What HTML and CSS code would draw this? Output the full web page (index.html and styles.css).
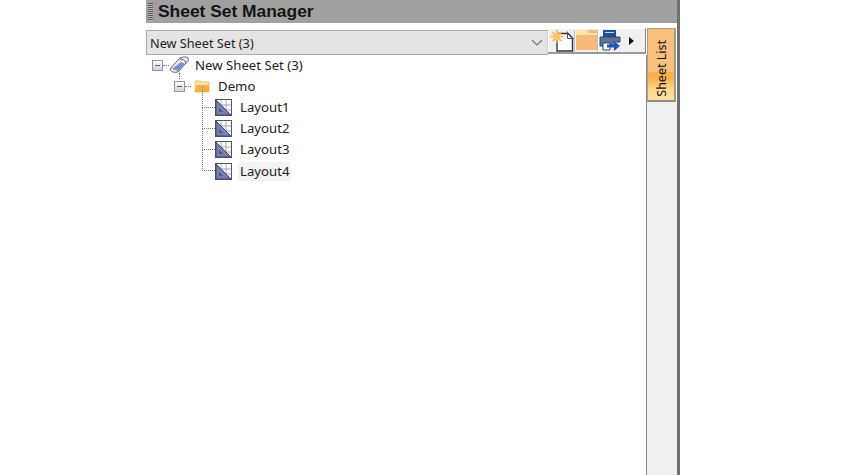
FILE: index.html
```html
<!DOCTYPE html>
<html lang="en">
<head>
<meta charset="utf-8">
<title>Sheet Set Manager</title>
<link rel="stylesheet" href="styles.css">
</head>
<body>
<div class="panel">
  <header class="title">
    <span class="grip"></span>
    <span class="title-text">Sheet Set Manager</span>
  </header>
  <div class="body">
    <div class="main">
      <div class="toolbar">
        <div class="combo">
          <span class="combo-text">New Sheet Set (3)</span>
          <svg class="chev" width="12" height="7" viewBox="0 0 12 7"><path d="M1 1l5 5 5-5" fill="none" stroke="#777" stroke-width="1.2"/></svg>
        </div>
        <div class="tools">
          <span class="tool tool-new">
            <svg width="25" height="22" viewBox="0 0 25 22">
              <path d="M8 3.500h11l4.500 4.500v13H8z" fill="#fff" stroke="#333" stroke-width="1.4"/>
              <path d="M18.500 1.500v7h6" fill="none" stroke="#555" stroke-width="1"/>
              <path d="M8 0v13M1.500 6.500h13M3.500 2l9 9M12.500 2l-9 9" stroke="#f9b34a" stroke-width="1.6"/>
              <circle cx="8" cy="6.500" r="3.500" fill="#fbc765"/>
            </svg>
          </span>
          <span class="tool tool-open">
            <svg width="21" height="20" viewBox="0 0 21 20">
              <rect width="21" height="20" fill="#f8b978"/>
              <path d="M0 0h11l2 3h8v2H0z" fill="#fde4a8"/>
            </svg>
          </span>
          <span class="tool tool-print">
            <svg width="22" height="21" viewBox="0 0 22 21">
              <path d="M4 0h13v7H4z" fill="#1f4aa5"/>
              <path d="M6 2.500h9" stroke="#cdd8ee" stroke-width="1"/>
              <path d="M1 7h20v5H14v3H4v1H1z" fill="#5f7590" stroke="#2d4670" stroke-width="1"/>
              <path d="M4 13h7v7H4z" fill="#fff" stroke="#2d4670"/>
              <path d="M8 14.500h7v-3.500l6 5-6 5v-3.500H8z" fill="#1c55c8"/>
            </svg>
            <svg class="arrow" width="5" height="8" viewBox="0 0 5 8"><path d="M0 0l5 4-5 4z" fill="#111"/></svg>
          </span>
        </div>
      </div>
      <ul class="tree">
        <li class="row row-root">
          <span class="expander"></span><span class="dash"></span>
          <svg class="ico-set" width="20" height="18" viewBox="0 0 20 18">
            <path d="M1 13L10 3c2-2 7-3 9-1 1 2 0 4-2 5l-7 8c-2 2-8 2-9-2z" fill="#eef0f4" stroke="#5a6070" stroke-width="1"/>
            <path d="M3 13l9-7 4 2-7 7z" fill="#6f8fd6"/>
            <path d="M11 3c2 0 5 1 6 4" fill="none" stroke="#5a6070"/>
          </svg>
          <span class="label">New Sheet Set (3)</span>
        </li>
        <li class="row row-sub">
          <span class="vline"></span>
          <span class="expander"></span><span class="dash"></span>
          <svg class="ico-folder" width="16" height="14" viewBox="0 0 16 14">
            <path d="M1 2h5l1 1h8v10H1z" fill="#fde4a8" stroke="#f3c46f"/>
            <path d="M1 13l1-7h13v7z" fill="#f7b04a"/>
          </svg>
          <span class="label">Demo</span>
        </li>
        <li class="row row-leaf"><span class="branch"></span><svg class="sheet" width="17" height="17" viewBox="0 0 17 17"><use href="#sheet"/></svg><span class="label">Layout1</span></li>
        <li class="row row-leaf"><span class="branch"></span><svg class="sheet" width="17" height="17" viewBox="0 0 17 17"><use href="#sheet"/></svg><span class="label">Layout2</span></li>
        <li class="row row-leaf"><span class="branch"></span><svg class="sheet" width="17" height="17" viewBox="0 0 17 17"><use href="#sheet"/></svg><span class="label">Layout3</span></li>
        <li class="row row-leaf"><span class="branch"></span><svg class="sheet" width="17" height="17" viewBox="0 0 17 17"><use href="#sheet"/></svg><span class="label label-hover">Layout4</span></li>
      </ul>
    </div>
    <aside class="side">
      <div class="tab"><span class="tab-text">Sheet List</span></div>
      <div class="side-fill"></div>
    </aside>
  </div>
</div>
<svg class="defs" width="0" height="0">
  <defs>
    <g id="sheet">
      <rect x="0.500" y="0.500" width="16" height="16" fill="#fff" stroke="#50557a"/>
      <path d="M6 1v15M11 1v15M1 6h15M1 11h15" stroke="#a5a5b0"/>
      <path d="M1 1l15 15H1z" fill="#7581b5" stroke="#444a70"/>
      <path d="M4 9l4 4H4z" fill="#4f5786"/>
    </g>
  </defs>
</svg>
</body>
</html>
```
FILE: styles.css
```css
* { box-sizing: border-box; }
html, body { margin: 0; height: 100%; background: #fff; overflow: hidden; }
body { font-family: "Liberation Sans", Arial, sans-serif; }
ul { list-style: none; margin: 0; padding: 0; }
.defs { display: block; height: 0; }
.panel { margin-left: 146px; width: 534px; height: 475px; display: flex; flex-direction: column; border-right: 3px solid #707070; }
.title { height: 23px; flex: none; background: #a0a0a0; display: flex; align-items: center; padding-left: 2px; }
.grip { width: 5px; height: 18px; background: repeating-linear-gradient(#555 0 1px, #bbb 1px 2px); }
.title-text { margin-left: 5px; font-size: 17.400px; font-weight: bold; color: #141414; white-space: nowrap; }
.body { flex: 1; display: flex; min-height: 0; }
.main { width: 501px; flex: none; display: flex; flex-direction: column; }
.toolbar { height: 32px; flex: none; display: flex; align-items: flex-start; padding-top: 5px; }
.combo { width: 402px; height: 25px; margin-top: 2px; background: #e4e4e4; border: 1px solid #ababab; border-right-color: #d0d0d0; display: flex; align-items: center; justify-content: space-between; padding: 0 3px; }
.combo-text { font-family: "Noto Sans", sans-serif; font-size: 12.700px; color: #222; }
.chev { margin-right: 1px; }
.tools { display: flex; height: 26px; width: 98px; background: #f0f0f0; border-bottom: 2px solid #9a9a9a; border-right: 1px solid #888; border-top: 1px solid #fff; padding-top: 1px; }
.tool { display: flex; align-items: flex-start; height: 22px; border-right: 1px solid #bdbdbd; border-left: 1px solid #fff; }
.tool-new { width: 27px; }
.tool-open { width: 23px; }
.tool-print { border-right: 0; flex: 1; align-items: flex-start; gap: 8px; }
.arrow { align-self: center; }
.tree { flex: 1; padding: 0 0 0 6px; margin-top: -0.500px; border-right: 1px solid #8a8a8a; }
.row { height: 21.200px; display: flex; align-items: center; position: relative; }
.label { font-family: "Noto Sans", sans-serif; font-size: 13.200px; color: #222; white-space: nowrap; padding: 0 2px; line-height: 19px; }
.expander { width: 11px; height: 11px; flex: none; border: 1px solid #8d95a8; background: linear-gradient(#fff, #cfd2da); position: relative; }
.expander::after { content: ""; position: absolute; left: 2px; right: 2px; top: 4px; height: 1px; background: #4a5a80; }
.dash { width: 6px; border-top: 1px dotted #777; flex: none; }
.ico-set { margin-right: 4px; flex: none; }
.row-sub { padding-left: 22px; }
.ico-folder { flex: none; margin: 0 6px 0 3px; }
.vline { position: absolute; left: 27px; top: -3px; height: 6px; border-left: 1px dotted #777; }
.row-leaf { padding-left: 49px; }
.branch { position: absolute; left: 50px; top: -10px; width: 13px; height: 21px; border-left: 1px dotted #777; border-bottom: 1px dotted #777; }
.sheet { flex: none; margin-left: 14px; margin-right: 6px; }
.label-hover { background: #f3f3f3; }
.side { flex: 1; display: flex; flex-direction: column; }
.tab { width: 29px; height: 74px; flex: none; margin-top: 5px; background: linear-gradient(#f9c080 0 60%, #f7b049 60% 68%, #fbd98a 85%, #fde0a0 100%); border: 1px solid #b0a080; border-bottom: 2px solid #8c8c8c; border-right: 2px solid #a09a90; display: flex; align-items: flex-end; justify-content: center; padding: 0 0 3px 1px; }
.tab-text { writing-mode: vertical-rl; transform: rotate(180deg); font-family: "Noto Sans", sans-serif; font-size: 12.500px; color: #111; white-space: nowrap; }
.side-fill { flex: 1; background: #f0f0f0; }
```
